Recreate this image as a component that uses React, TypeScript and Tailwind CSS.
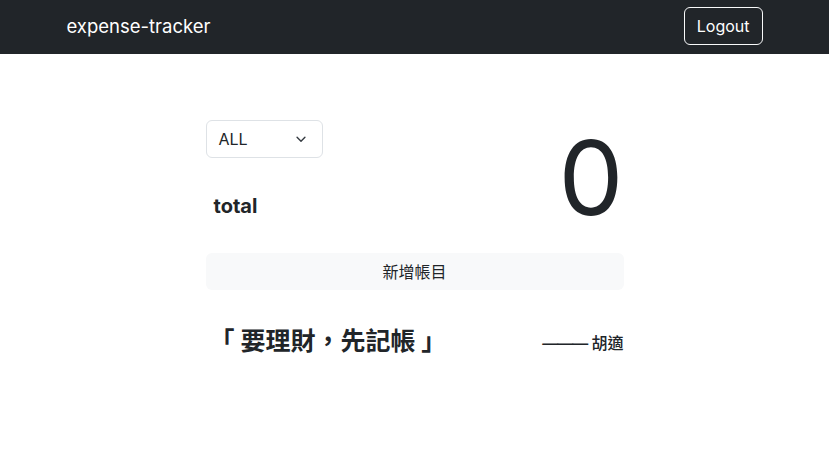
import React from "react";

export default function App() {
  return (
    <div className="min-h-[462px] bg-white text-[#212529]" style={{ fontFamily: "Inter, 'Noto Sans CJK TC', sans-serif" }}>
      <nav className="h-[54px] bg-[#212529]">
        <div className="mx-auto flex h-full w-[720px] items-center justify-between px-3">
          <span className="text-[18.5px] text-white">expense-tracker</span>
          <button className="mt-[-2px] h-[38px] rounded-md border border-[#f8f9fa] px-[12px] text-[16px] text-white">Logout</button>
        </div>
      </nav>
      <main className="mx-auto w-[418px] pt-[66px]">
        <div className="flex items-start justify-between">
          <div className="flex flex-col">
            <div className="flex h-[38px] w-[117px] items-center justify-between rounded-md border border-[#dee2e6] pl-3 pr-[14px] text-[16px]">
              <span>ALL</span>
              <svg width="14" height="14" viewBox="0 0 16 16" fill="none" stroke="#343a40" strokeWidth="1.6" strokeLinecap="round" strokeLinejoin="round">
                <path d="M3.5 6l4.5 4.5L12.5 6" />
              </svg>
            </div>
            <div className="mt-[33px] pl-2 text-[20px] font-bold">total</div>
          </div>
          <div className="mr-0 mt-[6px] text-[103px] leading-none font-normal">0</div>
        </div>
        <button className="mt-[24px] h-[37px] w-full rounded-md bg-[#f8f9fa] text-[16px]">新增帳目</button>
        <div className="mt-[33px] flex items-end justify-between">
          <div className="pl-[4px] text-[25px] font-bold">「 要理財，先記帳 」</div>
          <div className="mb-[6px] text-[16px] font-medium">
            <span className="tracking-[-1px]">———</span> 胡適
          </div>
        </div>
      </main>
    </div>
  );
}
